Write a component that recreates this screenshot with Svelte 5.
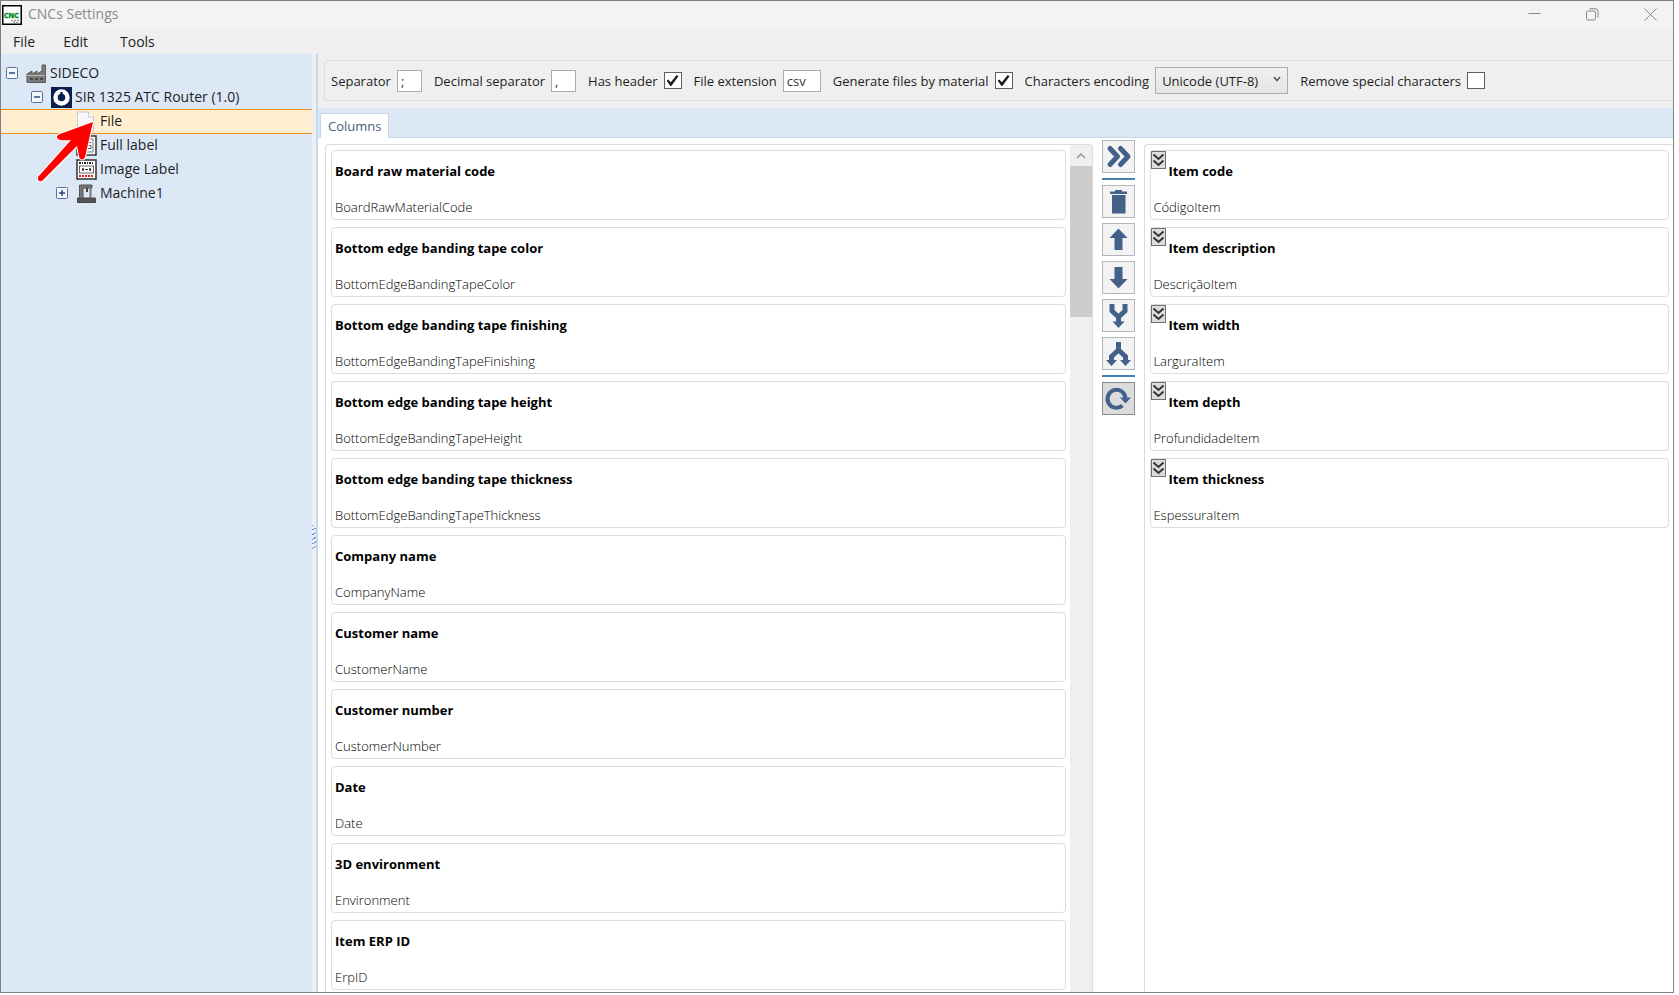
<script lang="ts">
  type Column = { title: string; field: string };

  const available: Column[] = [
    { title: "Board raw material code", field: "BoardRawMaterialCode" },
    { title: "Bottom edge banding tape color", field: "BottomEdgeBandingTapeColor" },
    { title: "Bottom edge banding tape finishing", field: "BottomEdgeBandingTapeFinishing" },
    { title: "Bottom edge banding tape height", field: "BottomEdgeBandingTapeHeight" },
    { title: "Bottom edge banding tape thickness", field: "BottomEdgeBandingTapeThickness" },
    { title: "Company name", field: "CompanyName" },
    { title: "Customer name", field: "CustomerName" },
    { title: "Customer number", field: "CustomerNumber" },
    { title: "Date", field: "Date" },
    { title: "3D environment", field: "Environment" },
    { title: "Item ERP ID", field: "ErpID" },
  ];

  const selected: Column[] = [
    { title: "Item code", field: "CódigoItem" },
    { title: "Item description", field: "DescriçãoItem" },
    { title: "Item width", field: "LarguraItem" },
    { title: "Item depth", field: "ProfundidadeItem" },
    { title: "Item thickness", field: "EspessuraItem" },
  ];

  const tree = [
    { label: "SIDECO", icon: "factory", level: 0, toggle: "minus" },
    { label: "SIR 1325 ATC Router (1.0)", icon: "router", level: 1, toggle: "minus" },
    { label: "File", icon: "file", level: 2, toggle: "" },
    { label: "Full label", icon: "label", level: 2, toggle: "" },
    { label: "Image Label", icon: "image", level: 2, toggle: "" },
    { label: "Machine1", icon: "machine", level: 2, toggle: "plus" },
  ];

  let current = $state("File");
  let separator = $state(";");
  let decimal = $state(",");
  let hasHeader = $state(true);
  let extension = $state("csv");
  let byMaterial = $state(true);
  let encoding = $state("Unicode (UTF-8)");
  let removeSpecial = $state(false);
</script>

<div class="window">
  <header class="titlebar">
    <svg width="20" height="20" viewBox="0 0 20 20">
      <rect x=".75" y=".75" width="18.5" height="18.5" fill="#fff" stroke="#000" stroke-width="1.5" />
      <text x="2" y="13" font-size="7" font-weight="700" fill="#0a8a2a" stroke="#0a8a2a" stroke-width=".5">CNC</text>
      <path d="M9 15.5h9M11 17.5h6" stroke="#999" stroke-width="1.5" stroke-dasharray="2 1" />
    </svg>
    <h1>CNCs Settings</h1>
    <div class="window-buttons">
      <button aria-label="Minimize">
        <svg width="13" height="13" viewBox="0 0 13 13"><path d="M.5 5.5h12" /></svg>
      </button>
      <button aria-label="Restore">
        <svg width="13" height="13" viewBox="0 0 13 13">
          <rect x=".5" y="3" width="9" height="9" rx="1.5" />
          <path d="M3.5 .7h5.5a3 3 0 0 1 3 3V9.5" />
        </svg>
      </button>
      <button aria-label="Close">
        <svg width="13" height="13" viewBox="0 0 13 13"><path d="M.5 .5l12 12M12.5 .5l-12 12" /></svg>
      </button>
    </div>
  </header>

  <nav class="menu">
    <button>File</button>
    <button>Edit</button>
    <button>Tools</button>
  </nav>

  <div class="body">
    <aside class="tree">
      {#each tree as node}
        <div class="node level-{node.level}" class:current={node.label === current}>
          {#if node.toggle}
            <button class="toggle" aria-label="Toggle {node.label}">
              <svg width="12" height="12" viewBox="0 0 12 12">
                <rect x=".5" y=".5" width="11" height="11" rx="1" fill="#f4f8fd" stroke="#5a7196" />
                <path d="M3 6h6" stroke="#2b4a7a" stroke-width="1.5" />
                {#if node.toggle === "plus"}<path d="M6 3v6" stroke="#2b4a7a" stroke-width="1.5" />{/if}
              </svg>
            </button>
          {:else}
            <span class="toggle"></span>
          {/if}
          <button class="node-label" onclick={() => (current = node.label)}>
            <svg width="21" height="21" viewBox="0 0 21 21">
              {#if node.icon === "factory"}
                <path d="M1 19.5V11L6 8v3l5-3v3l5-3V2h3.5v17.5z" fill="#7b7b7b" stroke="#5a5a5a" />
                <path d="M1 12.5h18" stroke="#b5b5b5" />
                <path d="M4 16h3M9 16h3M14 16h3" stroke="#4a4a4a" stroke-width="2" />
              {:else if node.icon === "router"}
                <rect width="21" height="21" fill="#0a1f4d" />
                <circle cx="10.5" cy="10.5" r="6" fill="none" stroke="#fff" stroke-width="4.5" />
                <path d="M9.3 5h2.4v6h-2.4z" fill="#0a1f4d" />
              {:else if node.icon === "file"}
                <path d="M1.5 1h11l5 5v14h-16z" fill="#f8f8f8" stroke="#c8c8c8" />
                <path d="M12.5 1v5h5" fill="#fff" stroke="#c8c8c8" />
              {:else if node.icon === "label"}
                <rect x="1" y="1" width="19" height="19" fill="#fff" stroke="#333" stroke-width="1.5" />
                <rect x="4" y="4" width="13" height="13" fill="#fff" stroke="#777" />
                <path d="M15 7.5h-4v6h4v-3h-2M8.5 7.5H6v6M6 10.5h2" fill="none" stroke="#555" />
              {:else if node.icon === "image"}
                <rect x="1" y="1" width="19" height="19" fill="#fff" stroke="#333" stroke-width="1.5" />
                <path d="M3 4h15" stroke="#222" stroke-width="2" stroke-dasharray="2 1 1 1" />
                <rect x="3.5" y="7" width="14" height="7" fill="#fff" stroke="#666" />
                <path d="M6 10.5h2M13 10.5h2" stroke="#333" stroke-width="2.5" />
                <path d="M9 10.5h3" stroke="#333" />
                <path d="M3 17h15" stroke="#e02020" stroke-width="2" stroke-dasharray="2 1" />
              {:else}
                <path d="M1.5 15h18v4.5h-18z" fill="#555" stroke="#444" />
                <path d="M3.5 15V2h12.5v3H7v10z" fill="#777" stroke="#555" />
                <path d="M14.500 3v12" stroke="#777" stroke-width="2" />
                <path d="M11 5v4" stroke="#444" stroke-width="2" />
              {/if}
            </svg>
            <span>{node.label}</span>
          </button>
        </div>
      {/each}
      <svg class="pointer" width="60" height="68" viewBox="0 0 60 68">
        <path d="M57 6L24 18Q19 20 22 23Q24 25 35 24L2 61Q1 66 6 65L41 30L43.5 42Q47 45.5 49 41Z" fill="#f00" stroke="#fff" stroke-width="2" stroke-linejoin="round" paint-order="stroke" />
      </svg>
    </aside>

    <div class="splitter"><span class="grip"></span></div>

    <main>
      <div class="options">
        <label>Separator <input class="text short" bind:value={separator} /></label>
        <label>Decimal separator <input class="text short" bind:value={decimal} /></label>
        <label>Has header <input type="checkbox" bind:checked={hasHeader} /></label>
        <label>File extension <input class="text" bind:value={extension} /></label>
        <label>Generate files by material <input type="checkbox" bind:checked={byMaterial} /></label>
        <label>
          Characters encoding
          <span class="select">
            <select bind:value={encoding}>
              <option>Unicode (UTF-8)</option>
            </select>
            <svg width="8" height="6" viewBox="0 0 8 6"><path d="M1 1l3 3.5L7 1" fill="none" stroke="#555" stroke-width="1.5" /></svg>
          </span>
        </label>
        <label>Remove special characters <input type="checkbox" bind:checked={removeSpecial} /></label>
      </div>

      <div class="tabs">
        <button class="tab">Columns</button>
      </div>

      <div class="columns">
        <section class="list source">
          <div class="cards">
            {#each available as col}
              <article class="card">
                <h2>{col.title}</h2>
                <p>{col.field}</p>
              </article>
            {/each}
          </div>
          <div class="scrollbar">
            <button class="scroll-up" aria-label="Scroll up">
              <svg width="10" height="6" viewBox="0 0 10 6"><path d="M1 5l4-4 4 4" fill="none" stroke="#999" stroke-width="1.5" /></svg>
            </button>
            <div class="thumb"></div>
          </div>
        </section>

        <div class="actions">
          <button class="action" aria-label="Add column">
            <svg width="31" height="31" viewBox="1 1 31 31">
              <path d="M8 8.5l7.500 8L8 24.5M18.5 8.5l7.5 8-7.5 8" class="line thick" />
            </svg>
          </button>
          <hr />
          <button class="action" aria-label="Remove column">
            <svg width="31" height="31" viewBox="1 1 31 31">
              <path d="M13 5h7v1.5h5v2.5H8V6.5h5zM10 10h13.5V28.5H10z" class="solid" />
            </svg>
          </button>
          <button class="action" aria-label="Move up">
            <svg width="31" height="31" viewBox="1 1 31 31">
              <path d="M16.5 5.500l9 9.5h-5v12h-8V15h-5z" class="solid" />
            </svg>
          </button>
          <button class="action" aria-label="Move down">
            <svg width="31" height="31" viewBox="1 1 31 31">
              <path d="M16.5 27.5l9-9.5h-5V6h-8v12h-5z" class="solid" />
            </svg>
          </button>
          <button class="action" aria-label="Merge columns">
            <svg width="31" height="31" viewBox="1 1 31 31">
              <path d="M10 5v7l6.5 6v6M23 5v7l-6.5 6" class="line wide" />
              <path d="M10.5 22.5h12l-6 6.5z" class="solid" />
            </svg>
          </button>
          <button class="action" aria-label="Split column">
            <svg width="31" height="31" viewBox="1 1 31 31">
              <path d="M16.5 5v8l-7 6.5V24M16.5 13l7 6.5V24" class="line wide" />
              <path d="M4 23h11l-5.5 6zM18 23h11l-5.5 6z" class="solid" />
            </svg>
          </button>
          <hr />
          <button class="action pressed" aria-label="Reset columns">
            <svg width="31" height="31" viewBox="1 1 31 31">
              <path d="M20.5 23.5a9 9 0 1 1 3-7.5" class="line" />
              <path d="M18 15.5h11l-5.5 6z" class="solid" />
            </svg>
          </button>
        </div>

        <section class="list target">
          <div class="cards">
            {#each selected as col}
              <article class="card">
                <button class="expand" aria-label="Expand {col.title}">
                  <svg width="13" height="16" viewBox="0 0 13 16">
                    <path d="M1.5 2.5l5 4.5 5-4.5M1.5 8.5l5 4.5 5-4.5" fill="none" stroke="#333" stroke-width="2" />
                  </svg>
                </button>
                <h2>{col.title}</h2>
                <p>{col.field}</p>
              </article>
            {/each}
          </div>
        </section>
      </div>
    </main>
  </div>
</div>

<style>
  :global(body) { background: #fff; }
  .window {
    box-sizing: border-box;
    height: calc(100vh - 2px);
    margin-right: 5px;
    display: flex;
    flex-direction: column;
    border: 1px solid #808080;
    background: #efefef;
    font-family: "Open Sans", "Segoe UI", sans-serif;
    font-size: 13px;
    color: #1e1e1e;
    overflow: hidden;
  }
  svg { display: block; flex: none; }
  button {
    padding: 0;
    border: 0;
    background: none;
    font: inherit;
    color: inherit;
  }

  .titlebar {
    display: flex;
    gap: 6px;
    height: 29px;
    padding: 0 0 2px 1px;
    box-sizing: border-box;
    align-items: center;
    background: #f3f3f3;
  }
  h1 {
    flex: 1;
    margin: 0;
    padding-bottom: 1px;
    font-size: 14px;
    line-height: 20px;
    font-weight: 400;
    color: #8a8a8a;
  }
  .window-buttons { display: flex; gap: 12px; }
  .window-buttons button { display: flex; width: 46px; justify-content: center; }
  .window-buttons svg { fill: none; stroke: #888; }

  .menu {
    display: flex;
    height: 24px;
    font-size: 14px;
  }
  .menu button { padding: 0 16px 2px 12px; }
  .menu button:last-child { padding-left: 16px; }

  .body { display: flex; flex: 1; min-height: 0; }
  .tree {
    position: relative;
    flex: none;
    width: 311px;
    padding-top: 7px;
    box-sizing: border-box;
    background: #dde8f6;
    font-size: 14px;
  }
  .node {
    display: flex;
    box-sizing: border-box;
    height: 24px;
    align-items: center;
  }
  .level-1 { padding-left: 25px; }
  .level-2 { padding-left: 50px; }
  .node.current {
    background: #ffefd0;
    box-shadow: inset 0 1px #f08a24, 0 1px #f08a24;
  }
  .toggle { width: 12px; margin: 0 8px 0 5px; }
  .node-label { display: flex; gap: 3px; align-items: center; }
  .node-label span { padding-bottom: 1px; }
  .pointer { position: absolute; left: 35px; top: 62px; }

  .splitter {
    display: flex;
    align-items: center;
    width: 4px;
    padding-top: 28px;
    border-right: 2px solid #c5d9f3;
  }
  .grip {
    width: 4px;
    height: 24px;
    background: repeating-linear-gradient(150deg, #5f97dd 0 1px, #efefef 1px 4px);
  }

  main { flex: 1; min-width: 0; display: flex; flex-direction: column; }
  .options {
    display: flex;
    gap: 12px;
    box-sizing: border-box;
    height: 41px;
    margin: 6px 0 7px 6px;
    padding-left: 6px;
    align-items: center;
    border: 1px solid #dcdcdc;
    border-right: 0;
    border-radius: 4px 0 0 4px;
  }
  label { display: flex; gap: 6px; align-items: center; white-space: nowrap; }
  .text {
    box-sizing: border-box;
    width: 38px;
    height: 22px;
    padding: 0 3px;
    border: 1px solid #abadb3;
    background: #fff;
    font: inherit;
    color: #333;
  }
  .short { width: 25px; }
  input[type="checkbox"] {
    appearance: none;
    display: grid;
    place-items: center;
    box-sizing: border-box;
    width: 18px;
    height: 17px;
    margin: 0;
    border: 1px solid #5f5f5f;
    background: #fff;
  }
  input[type="checkbox"]:checked::before {
    content: "";
    width: 12px;
    height: 11px;
    background: #1e1e1e;
    clip-path: polygon(0 50%, 14% 40%, 36% 66%, 84% 0, 100% 12%, 40% 100%, 32% 100%);
  }
  .select { position: relative; }
  select {
    appearance: none;
    display: block;
    width: 133px;
    height: 27px;
    padding: 0 6px;
    border: 1px solid #acacac;
    border-radius: 0;
    background: linear-gradient(#f0f0f0, #e5e5e5);
    font: inherit;
    color: inherit;
  }
  .select svg { position: absolute; right: 7px; top: 9px; }

  .tabs {
    display: flex;
    box-sizing: border-box;
    height: 30px;
    padding: 5px 0 0 2px;
    align-items: stretch;
    background: #dde8f5;
    border-bottom: 1px solid #c8d6ea;
  }
  .tab {
    margin-bottom: -1px;
    padding: 0 7px;
    border: 1px solid #c8d6ea;
    border-bottom: 0;
    border-radius: 2px 2px 0 0;
    background: #fff;
    color: #4a6078;
  }

  .columns {
    display: grid;
    grid-template-columns: minmax(0, 769fr) 33px minmax(0, 529fr);
    gap: 9px;
    flex: 1;
    min-height: 0;
    padding-left: 7px;
    background: #fff;
  }
  .list {
    display: flex;
    margin-top: 6px;
    border: 1px solid #dcdcdc;
    border-bottom: 0;
    border-radius: 4px 4px 0 0;
    min-height: 0;
    overflow: hidden;
  }
  .target { border-right: 0; border-radius: 4px 0 0 0; }
  .cards {
    flex: 1;
    min-width: 0;
    display: flex;
    flex-direction: column;
    gap: 7px;
    padding: 5px 4px 0 5px;
  }
  .card {
    display: grid;
    grid-template-columns: auto 1fr;
    flex: none;
    align-content: start;
    border: 1px solid #dcdcdc;
    border-radius: 4px;
  }
  h2 {
    margin: 0;
    padding: 9px 3px 0;
    font-size: 13px;
    line-height: 22px;
    font-weight: 700;
    color: #000;
  }
  p {
    grid-column: 1 / -1;
    margin: 0;
    padding: 15px 3px 1px;
    font-size: 13px;
    line-height: 21px;
    font-weight: 300;
    color: #000;
  }
  .source h2 { grid-column: 1 / -1; }
  .target h2, .target p { padding-left: 2px; }
  .expand {
    box-sizing: border-box;
    width: 15px;
    height: 18px;
    border: 1px solid #707070;
    background: #dcdcdc;
  }

  .scrollbar { width: 22px; background: #efefef; }
  .scroll-up { display: grid; place-items: center; width: 100%; height: 21px; }
  .thumb { height: 151px; background: #cdcdcd; }

  .actions { display: flex; flex-direction: column; gap: 5px; padding-top: 2px; }
  .action {
    box-sizing: border-box;
    flex: none;
    width: 33px;
    height: 33px;
    border: 1px solid #b4b7bb;
    background: #f3f3f3;
  }
  .action.pressed { border-color: #8c8c8c; background: #dcdcdc; }
  .line { fill: none; stroke: #44618a; stroke-width: 4; }
  .wide { stroke-width: 5; }
  .thick { stroke-width: 5; stroke-linecap: round; stroke-linejoin: round; }
  .solid { fill: #44618a; }
  hr { width: 100%; height: 2px; margin: 0; border: 0; background: #4682b4; }
</style>
